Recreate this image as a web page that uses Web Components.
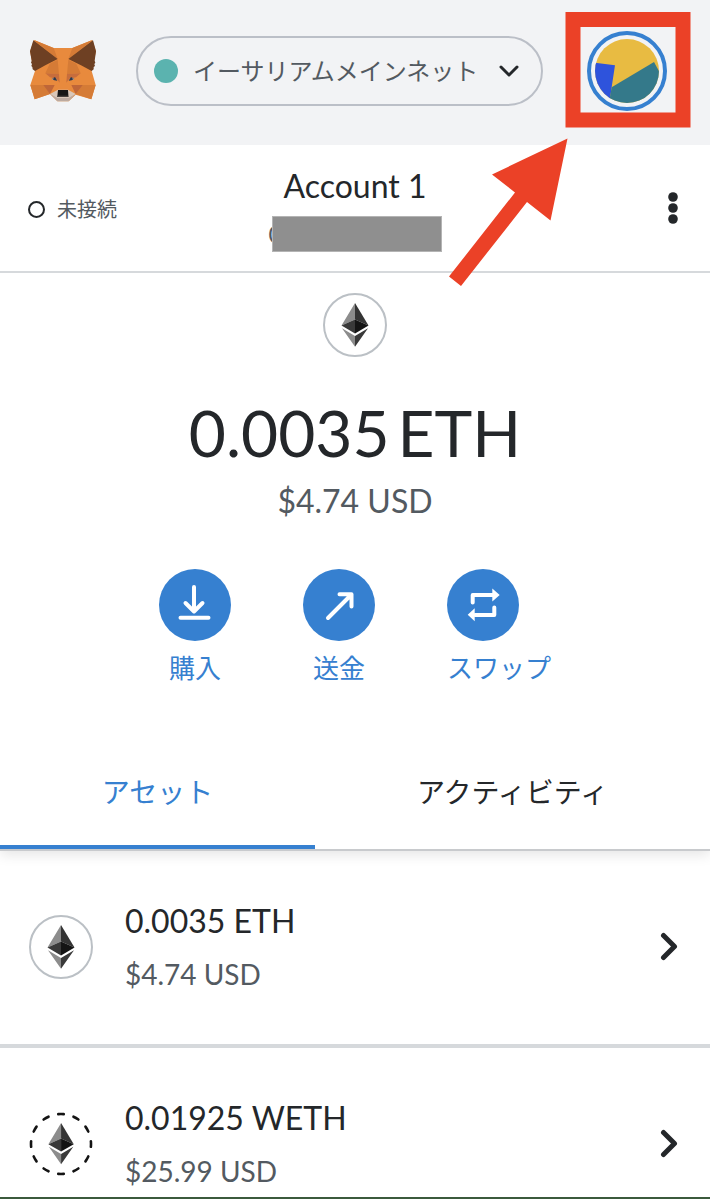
<!DOCTYPE html>
<html lang="ja">
<head>
<meta charset="utf-8">
<meta name="viewport" content="width=device-width, initial-scale=1">
<title>MetaMask</title>
<style>
  body {
    margin: 0;
    background: #fff;
    color: #24272a;
    font-family: Lato, "Noto Sans CJK JP", sans-serif;
  }
</style>
</head>
<body>
<wallet-app>
  <wallet-header slot="header" network="イーサリアムメインネット"></wallet-header>
  <account-bar slot="menu" status="未接続" name="Account 1"></account-bar>
  <wallet-balance amount="0.0035" unit="ETH" fiat="$4.74 USD">
    <wallet-action icon="buy">購入</wallet-action>
    <wallet-action icon="send">送金</wallet-action>
    <wallet-action icon="swap">スワップ</wallet-action>
  </wallet-balance>
  <wallet-tabs>
    <wallet-tab active>アセット</wallet-tab>
    <wallet-tab>アクティビティ</wallet-tab>
  </wallet-tabs>
  <asset-item amount="0.0035 ETH" fiat="$4.74 USD"></asset-item>
  <asset-item amount="0.01925 WETH" fiat="$25.99 USD" ring="dashed"></asset-item>
  <arrow-callout slot="callout"></arrow-callout>
</wallet-app>

<script>
const reset = `
  * { box-sizing: border-box; }
  button {
    margin: 0;
    padding: 0;
    border: 0;
    background: none;
    color: inherit;
    font: inherit;
    cursor: pointer;
  }
  svg { display: block; flex: none; }
`;

class BaseElement extends HTMLElement {
  constructor() {
    super();
    this.attachShadow({ mode: "open" });
  }
  attr(name) {
    return this.getAttribute(name) || "";
  }
  connectedCallback() {
    const template = document.createElement("template");
    template.innerHTML = `<style>${reset}${this.getStyles()}</style>${this.getTemplate()}`;
    this.shadowRoot.replaceChildren(template.content.cloneNode(true));
  }
}

class WalletApp extends BaseElement {
  getStyles() {
    return `
      :host {
        display: flex;
        flex-direction: column;
        position: relative;
        box-sizing: border-box;
        height: 100vh;
        overflow: hidden;
        border-bottom: 2px solid #3b5a3c;
      }
      main { display: flex; flex-direction: column; flex: 1; min-height: 0; }
      main ::slotted(*) { flex: none; }
    `;
  }
  getTemplate() {
    return `
      <slot name="header"></slot>
      <slot name="menu"></slot>
      <main><slot></slot></main>
      <slot name="callout"></slot>
    `;
  }
}
customElements.define("wallet-app", WalletApp);

class FoxLogo extends BaseElement {
  getStyles() {
    return `:host { display: block; flex: none; }`;
  }
  getTemplate() {
    return `
      <svg width="68" height="64" viewBox="89 57 204 192" role="img" aria-label="MetaMask">
        <path fill="#e88a3d" d="M104 60 163 84H219L279 60 290 94 283 125 277 153 289 195 276 238 229 224 208 244H174L152 222 106 238 93 195 107 153 98 125 92 94Z"/>
        <path fill="#d57b36" d="M104 60 163 84 175 117ZM279 60 219 84 207 117Z"/>
        <path fill="#6e4023" d="M102 61 175 117 138 136 107 153 100 148 99 141 96 138 98 132 95 128 97 122 92 94ZM281 61 207 117 245 136 277 153 283 148 283 141 287 138 285 132 288 128 286 122 290 94Z"/>
        <path fill="#d57b36" d="M175 119 151 131 138 160 179 162ZM207 119 231 131 244 160 203 162ZM93 195H137L152 222 106 238ZM289 195H246L229 222 276 238Z"/>
        <path fill="#bf6638" d="M132 195 166 195 152 222ZM250 195 216 195 229 222Z"/>
        <path fill="#c76d3c" d="M138 160 179 162 181 188 172 176 152 172ZM244 160 203 162 201 188 210 176 230 172Z"/>
        <path fill="#2a3a50" d="M157 177 167 171 174 182 165 181ZM225 177 215 171 208 182 217 181Z"/>
        <path fill="#b8a69b" d="M157 177 163 174 161 180ZM225 177 219 174 221 180Z"/>
        <path fill="#d9c7b9" d="M152 222 176 209H206L229 222 208 236H174Z"/>
        <path fill="#bcaaa0" d="M152 222 174 234H208L229 222 208 244H174Z"/>
        <path fill="#46403d" d="M176 210H206L208 231H173Z"/>
        <path fill="#161616" d="M176 210H206V227H176Z"/>
      </svg>
    `;
  }
}
customElements.define("fox-logo", FoxLogo);

class AccountIcon extends BaseElement {
  getStyles() {
    return `
      :host { display: block; flex: none; }
      button { display: block; border-radius: 50%; }
    `;
  }
  getTemplate() {
    return `
      <button type="button" aria-label="Account 1">
        <svg width="80" height="80" viewBox="0 0 240 240">
          <clipPath id="face"><circle cx="120" cy="120" r="96"/></clipPath>
          <circle cx="120" cy="120" r="114" fill="#f2f3f5" stroke="#3680d0" stroke-width="12"/>
          <g clip-path="url(#face)">
            <path fill="#e8bb42" d="M0 0H240V240H0Z"/>
            <path fill="#2e53dc" d="M10 93 84 103 74 169 68 210 10 210Z"/>
            <path fill="#34798a" d="M74 169 201 93 230 146V240H62Z"/>
          </g>
        </svg>
      </button>
    `;
  }
}
customElements.define("account-icon", AccountIcon);

class WalletHeader extends BaseElement {
  getStyles() {
    return `
      :host { display: block; flex: none; }
      header {
        display: flex;
        align-items: center;
        padding: 31px 43px 34px 29px;
        background: #f2f3f5;
      }
      .network {
        display: flex;
        flex: 1;
        align-items: center;
        gap: 15px;
        height: 70px;
        margin: 0 44px 0 39px;
        padding: 0 22px 0 16px;
        border: 2px solid #bbbfc7;
        border-radius: 35px;
        color: #535a61;
        font-size: 24px;
        line-height: 36px;
      }
      .dot {
        flex: none;
        width: 24px;
        height: 24px;
        border-radius: 50%;
        background: #5bb3af;
      }
      .label { flex: 1; text-align: left; white-space: nowrap; }
    `;
  }
  getTemplate() {
    return `
      <header>
        <fox-logo></fox-logo>
        <button class="network" type="button">
          <span class="dot"></span>
          <span class="label">${this.attr("network")}</span>
          <svg width="20" height="14" viewBox="0 0 20 14" fill="none" stroke="#24272a" stroke-width="3" stroke-linecap="round" stroke-linejoin="round"><path d="M2 3 10 11 18 3"/></svg>
        </button>
        <account-icon></account-icon>
      </header>
    `;
  }
}
customElements.define("wallet-header", WalletHeader);

class AccountBar extends BaseElement {
  getStyles() {
    return `
      :host { display: block; flex: none; }
      .bar {
        display: grid;
        grid-template-columns: 1fr auto 1fr;
        align-items: center;
        padding: 21px 28px 19px;
        border-bottom: 2px solid #d6d9dc;
      }
      .status {
        display: flex;
        align-items: center;
        gap: 12px;
        color: #535a61;
        font-size: 20px;
        line-height: 28px;
      }
      .ring {
        width: 17px;
        height: 17px;
        border: 2px solid #24272a;
        border-radius: 50%;
      }
      .account {
        display: flex;
        flex-direction: column;
        align-items: center;
        gap: 10px;
      }
      .name { font-size: 32px; line-height: 40px; }
      .address {
        position: relative;
        width: 173px;
        color: #535a61;
        font-size: 24px;
        line-height: 36px;
        text-align: left;
      }
      /* hides the address */
      .mask {
        position: absolute;
        inset: 0 0 0 3px;
        border: 1px solid #b4b4b4;
        background: #8f8f8f;
      }
      .more { justify-self: end; }
    `;
  }
  getTemplate() {
    return `
      <div class="bar">
        <div class="status"><span class="ring"></span>${this.attr("status")}</div>
        <button class="account" type="button">
          <span class="name">${this.attr("name")}</span>
          <span class="address">0<span class="mask"></span></span>
        </button>
        <button class="more" type="button" aria-label="メニュー">
          <svg width="18" height="36" viewBox="0 0 18 36" fill="#24272a"><circle cx="9" cy="6" r="4.8"/><circle cx="9" cy="17" r="4.8"/><circle cx="9" cy="28" r="4.8"/></svg>
        </button>
      </div>
    `;
  }
}
customElements.define("account-bar", AccountBar);

class TokenIcon extends BaseElement {
  getStyles() {
    return `:host { display: block; flex: none; }`;
  }
  getTemplate() {
    const dashed = this.attr("ring") === "dashed";
    const ring = dashed
      ? `<circle cx="32" cy="32" r="30" fill="none" stroke="#141414" stroke-width="2.6" stroke-linecap="round" pathLength="120" stroke-dasharray="3.6 6.4" stroke-dashoffset="1.8"/>`
      : `<circle cx="32" cy="32" r="31" fill="#fff" stroke="#bbc0c5" stroke-width="2"/>`;
    const scale = dashed ? "translate(2 1.6) scale(.94)" : "scale(1)";
    return `
      <svg width="64" height="64" viewBox="0 0 64 64" aria-hidden="true">
        ${ring}
        <g transform="${scale}">
          <path fill="#8c8c8c" d="M32 10V26.5L18.5 32.5ZM19 35.2 32 43V53.8Z"/>
          <path fill="#343434" d="M32 10V26.5L45.5 32.5Z"/>
          <path fill="#393939" d="M32 26.5V40.4L18.5 32.5ZM45 35.2 32 43V53.8Z"/>
          <path fill="#141414" d="M32 26.5V40.4L45.5 32.5Z"/>
        </g>
      </svg>
    `;
  }
}
customElements.define("token-icon", TokenIcon);

class WalletBalance extends BaseElement {
  getStyles() {
    return `
      :host { display: block; }
      section {
        display: flex;
        flex-direction: column;
        align-items: center;
        padding: 20px 0 48px;
      }
      .amount {
        display: flex;
        gap: 8px;
        margin-top: 36px;
        font-size: 64px;
        line-height: 80px;
      }
      .fiat { margin-top: 8px; color: #535a61; font-size: 32px; line-height: 40px; }
      .actions { display: flex; gap: 72px; margin-top: 48px; }
    `;
  }
  getTemplate() {
    return `
      <section>
        <token-icon></token-icon>
        <div class="amount">
          <span>${this.attr("amount")}</span>
          <span>${this.attr("unit")}</span>
        </div>
        <div class="fiat">${this.attr("fiat")}</div>
        <div class="actions"><slot></slot></div>
      </section>
    `;
  }
}
customElements.define("wallet-balance", WalletBalance);

const actionIcons = {
  buy: `<path d="M35 18V42M26.5 34 35 42.5 43.5 34M21.5 48.7H49.5"/>`,
  send: `<path d="M25 49 48 26M36.5 25.2H48.5V37.5"/>`,
  swap: `
    <path d="M25.7 33.5V26H46M47.3 38.5V46H28"/>
    <path stroke="none" fill="#fff" d="M45.3 19.5 52.7 26 45.3 32.5ZM27.7 39.3 20.7 45.8 27.7 52.3Z"/>
  `
};

class WalletAction extends BaseElement {
  getStyles() {
    return `
      :host { display: block; }
      button {
        display: block;
        min-width: 72px;
        color: #3680d0;
        font-size: 26px;
        line-height: 36px;
        text-align: center;
        white-space: nowrap;
      }
      .label { display: block; margin-top: 9px; }
    `;
  }
  getTemplate() {
    return `
      <button type="button">
        <svg width="72" height="72" viewBox="0 0 72 72" fill="none" stroke="#fff" stroke-width="4" stroke-linecap="round" stroke-linejoin="round">
          <circle cx="36" cy="36" r="36" fill="#3680d0" stroke="none"/>
          ${actionIcons[this.attr("icon")]}
        </svg>
        <span class="label"><slot></slot></span>
      </button>
    `;
  }
}
customElements.define("wallet-action", WalletAction);

class WalletTabs extends BaseElement {
  getStyles() {
    return `
      :host { display: block; }
      /* the clip keeps the shadow below the bar only */
      nav {
        display: flex;
        border-bottom: 2px solid #c8cacd;
        box-shadow: 0 4px 12px rgba(0, 0, 0, 0.1);
        clip-path: inset(0 0 -20px 0);
      }
    `;
  }
  getTemplate() {
    return `<nav role="tablist"><slot></slot></nav>`;
  }
}
customElements.define("wallet-tabs", WalletTabs);

class WalletTab extends BaseElement {
  getStyles() {
    return `
      :host { display: block; flex: 1 1 auto; }
      button {
        display: block;
        width: 100%;
        padding: 40px 0 35px;
        border-bottom: 4px solid transparent;
        font-size: 28px;
        line-height: 36px;
        text-align: center;
      }
      :host([active]) button { border-color: #3680d0; color: #3680d0; }
    `;
  }
  getTemplate() {
    return `<button type="button" role="tab" aria-selected="${this.hasAttribute("active")}"><slot></slot></button>`;
  }
}
customElements.define("wallet-tab", WalletTab);

class AssetItem extends BaseElement {
  getStyles() {
    return `
      :host { display: block; }
      button {
        display: flex;
        align-items: center;
        gap: 32px;
        width: 100%;
        padding: 50px 32px 52px 29px;
        border-bottom: 4px solid #d6d9dc;
        text-align: left;
      }
      .text { display: flex; flex: 1; flex-direction: column; gap: 15px; }
      .amount { font-size: 32px; line-height: 40px; }
      .fiat { color: #535a61; font-size: 28px; line-height: 36px; }
    `;
  }
  getTemplate() {
    return `
      <button type="button">
        <token-icon ring="${this.attr("ring")}"></token-icon>
        <span class="text">
          <span class="amount">${this.attr("amount")}</span>
          <span class="fiat">${this.attr("fiat")}</span>
        </span>
        <svg width="18" height="30" viewBox="0 0 18 30" fill="none" stroke="#24272a" stroke-width="5" stroke-linecap="round" stroke-linejoin="round"><path d="M3.5 3.5 14.5 14.5 3.5 25.5"/></svg>
      </button>
    `;
  }
}
customElements.define("asset-item", AssetItem);

/* frame round the account icon and the arrow that leads to it */
class ArrowCallout extends BaseElement {
  getStyles() {
    return `
      :host {
        position: absolute;
        top: 0;
        right: 0;
        pointer-events: none;
      }
    `;
  }
  getTemplate() {
    return `
      <svg width="270" height="300" viewBox="440 0 270 300" aria-hidden="true">
        <path fill="none" stroke="#eb4127" stroke-width="15" d="M573 19.5H683V120H573Z"/>
        <path fill="#eb4127" d="M567.5 138.5 492 174.5 515 192.5 449 276.5 461 286 527 202 550.5 220.5Z"/>
      </svg>
    `;
  }
}
customElements.define("arrow-callout", ArrowCallout);
</script>
</body>
</html>
